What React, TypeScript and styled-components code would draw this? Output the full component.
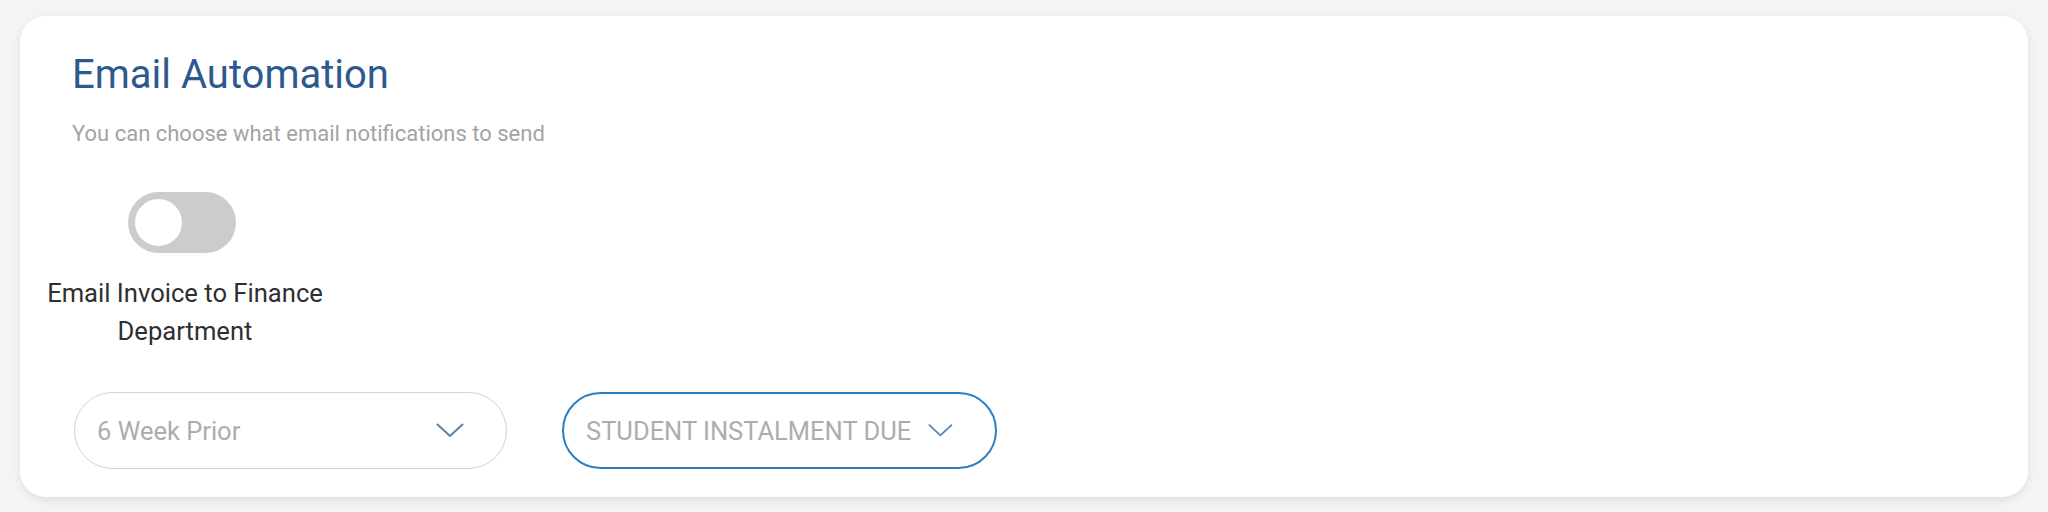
import React, { useState } from 'react';
import styled, { createGlobalStyle } from 'styled-components';

const GlobalStyle = createGlobalStyle`
  html, body {
    margin: 0;
    padding: 0;
    background: #f4f4f4;
    font-family: Roboto, "Liberation Sans", Arial, sans-serif;
  }
`;

const Page = styled.div`
  padding: 16px 20px 15px 20px;
`;

const Card = styled.section`
  background: #ffffff;
  border-radius: 26px;
  box-shadow: 0 3px 8px rgba(0, 0, 0, 0.09);
  padding: 35px 17px 28px 17px;
  display: flex;
  flex-direction: column;
`;

const Header = styled.div`
  padding-left: 35px;
`;

const Title = styled.h2`
  margin: 0;
  font-size: 40px;
  line-height: 48px;
  font-weight: 400;
  color: #2c5a8f;
`;

const Subtitle = styled.p`
  margin: 22px 0 0;
  font-size: 22px;
  line-height: 26px;
  color: #a3a3a3;
`;

const ToggleGroup = styled.div`
  width: 296px;
  margin-top: 45px;
  display: flex;
  flex-direction: column;
  align-items: center;
`;

const Track = styled.button<{ on: boolean }>`
  width: 108px;
  height: 61px;
  border: none;
  border-radius: 31px;
  padding: 0 7px;
  margin-left: -6px;
  background: ${(p) => (p.on ? '#2b7fc1' : '#cccccc')};
  display: flex;
  align-items: center;
  justify-content: ${(p) => (p.on ? 'flex-end' : 'flex-start')};
  cursor: pointer;
`;

const Knob = styled.span`
  width: 47px;
  height: 47px;
  border-radius: 50%;
  background: #ffffff;
`;

const ToggleLabel = styled.div`
  margin-top: 21px;
  font-size: 25.6px;
  line-height: 38px;
  color: #2f2f2f;
  text-align: center;
`;

const SelectRow = styled.div`
  display: flex;
  gap: 55px;
  margin: 42px 0 0 37px;
`;

const Select = styled.div<{ active?: boolean; width: number }>`
  box-sizing: border-box;
  width: ${(p) => p.width}px;
  height: 77px;
  border-radius: 39px;
  border: ${(p) => (p.active ? '2px solid #2b7fc1' : '1.5px solid #d2d2d2')};
  padding: 0 42px 0 22px;
  display: flex;
  align-items: center;
  justify-content: space-between;
  gap: 17px;
`;

const SelectText = styled.span`
  font-size: 25.5px;
  color: #adadad;
  white-space: nowrap;
`;

const Chevron = () => (
  <svg width="28" height="15" viewBox="0 0 28 15" fill="none">
    <path d="M1.5 1.5 L14 13 L26.5 1.5" stroke="#5f81aa" strokeWidth="2" strokeLinecap="round" strokeLinejoin="round" />
  </svg>
);

export default function App() {
  const [on, setOn] = useState(false);
  return (
    <Page>
      <GlobalStyle />
      <Card>
        <Header>
          <Title>Email Automation</Title>
          <Subtitle>You can choose what email notifications to send</Subtitle>
        </Header>
        <ToggleGroup>
          <Track on={on} onClick={() => setOn(!on)}>
            <Knob />
          </Track>
          <ToggleLabel>Email Invoice to Finance Department</ToggleLabel>
        </ToggleGroup>
        <SelectRow>
          <Select width={433}>
            <SelectText>6 Week Prior</SelectText>
            <Chevron />
          </Select>
          <Select width={435} active>
            <SelectText>STUDENT INSTALMENT DUE</SelectText>
            <Chevron />
          </Select>
        </SelectRow>
      </Card>
    </Page>
  );
}
